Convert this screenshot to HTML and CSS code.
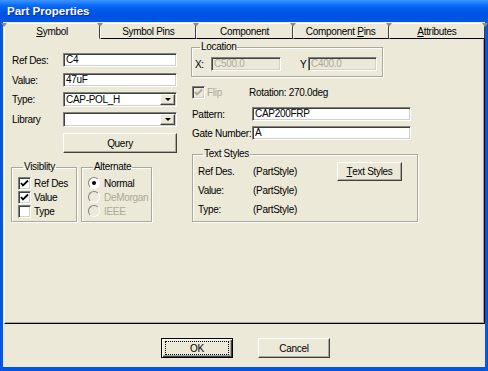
FILE: index.html
```html
<!DOCTYPE html>
<html lang="en">
<head>
    <meta charset="UTF-8">
    <title>Part Properties</title>
    <link rel="stylesheet" href="styles.css">
</head>
<body>
    <div class="window">
        <div class="titlebar"><span class="title">Part Properties</span></div>
        <div class="client">
            <div class="tabs">
                <div class="tab active"><u>S</u>ymbol</div>
                <div class="tab">Symbol Pins</div>
                <div class="tab">Component</div>
                <div class="tab">Component <u>P</u>ins</div>
                <div class="tab last"><u>A</u>ttributes</div>
            </div>
            <div class="panel">
                <div class="col-left">
                    <div class="field f1"><span class="lbl">Ref Des:</span><div class="edit">C4</div></div>
                    <div class="field f2"><span class="lbl">Value:</span><div class="edit">47uF</div></div>
                    <div class="field f3"><span class="lbl">Type:</span>
                        <div class="combo"><span class="combo-text">CAP-POL_H</span><span class="drop"><i></i></span></div>
                    </div>
                    <div class="field f4"><span class="lbl">Library</span>
                        <div class="combo"><span class="combo-text"></span><span class="drop"><i></i></span></div>
                    </div>
                    <div class="btn query">Query</div>

                    <div class="groups">
                        <fieldset class="group vis">
                            <legend>Visiblity</legend>
                            <div class="opt"><span class="check"><svg width="9" height="9" viewBox="0 0 9 9"><path d="M1 4 L3 6.5 L8 1.5" fill="none" stroke="#000" stroke-width="1.8"/></svg></span>Ref Des</div>
                            <div class="opt"><span class="check"><svg width="9" height="9" viewBox="0 0 9 9"><path d="M1 4 L3 6.5 L8 1.5" fill="none" stroke="#000" stroke-width="1.8"/></svg></span>Value</div>
                            <div class="opt"><span class="check"></span>Type</div>
                        </fieldset>
                        <fieldset class="group alt">
                            <legend>Alternate</legend>
                            <div class="opt"><span class="radio on"></span>Normal</div>
                            <div class="opt off"><span class="radio"></span>DeMorgan</div>
                            <div class="opt off"><span class="radio"></span>IEEE</div>
                        </fieldset>
                    </div>
                </div>

                <div class="col-right">
                    <fieldset class="group loc">
                        <legend>Location</legend>
                        <div class="loc-row">
                            <span class="lbl-x">X:</span><div class="edit disabled w-x">C500.0</div>
                            <span class="lbl-y">Y</span><div class="edit disabled w-y">C400.0</div>
                        </div>
                    </fieldset>

                    <div class="flip-row">
                        <span class="check disabled"><svg width="9" height="9" viewBox="0 0 9 9"><path d="M1 4 L3 6.5 L8 1.5" fill="none" stroke="#aca899" stroke-width="1.8"/></svg></span>
                        <span class="flip-lbl">Flip</span>
                        <span>Rotation: 270.0deg</span>
                    </div>

                    <div class="field r1"><span class="lbl wide">Pattern:</span><div class="edit long">CAP200FRP</div></div>
                    <div class="field r2"><span class="lbl wide">Gate Number:</span><div class="edit long">A</div></div>

                    <fieldset class="group styles">
                        <legend>Text Styles</legend>
                        <div class="style-grid">
                            <span>Ref Des.</span><span>(PartStyle)</span><div class="btn txt-btn"><u>T</u>ext Styles</div>
                            <span>Value:</span><span>(PartStyle)</span><span></span>
                            <span>Type:</span><span>(PartStyle)</span><span></span>
                        </div>
                    </fieldset>
                </div>
            </div>

            <div class="actions">
                <div class="btn default"><span class="focus">OK</span></div>
                <div class="btn">Cancel</div>
            </div>
        </div>
    </div>
</body>
</html>
```

FILE: styles.css
```css
*
{
  margin: 0;
  padding: 0;
  box-sizing: border-box;
}
body{
  width: 488px;
  height: 371px;
  overflow: hidden;
  font-family: "Liberation Sans", Arial, sans-serif;
  font-size: 10px;
  letter-spacing: -0.3px;
  color: #000;
  white-space: nowrap;
}
.window{
  width: 488px;
  height: 371px;
  display: flex;
  flex-direction: column;
  background: linear-gradient(90deg, #0042c8 0, #0a5cf2 1px, #0055e5 3px, #0055e5 485px, #0a5cf2 487px, #0042c8 488px);
}
.titlebar{
  height: 22px;
  padding-left: 7px;
  display: flex;
  align-items: center;
  background: linear-gradient(#3d95ff 0, #2a87ff 2px, #0d6dfb 5px, #025ded 9px, #0054e3 13px, #0053e0 18px, #0059ea 22px);
}
.title{
  color: #fff;
  font-weight: bold;
  font-size: 11.5px;
  letter-spacing: 0;
  text-shadow: 1px 1px #0b2e9a;
}
.client{
  flex: 1;
  margin: 0 3px 4px 3px;
  padding: 1px 0 0 1px;
  background: #ece9d8;
  display: flex;
  flex-direction: column;
}

/* tabs */
.tabs{
  display: flex;
  height: 16px;
}
.tab{
  position: relative;
  flex: 1;
  text-align: center;
  line-height: 16px;
  border: 1px solid;
  border-color: #fff #404040 #000 #fff;
}
.tab.active{
  border-bottom-color: #ece9d8;
}
.tab::before{
  content: '';
  position: absolute;
  top: -1px;
  left: -4px;
  border-left: 3px solid transparent;
  border-right: 3px solid transparent;
  border-top: 4px solid #8d8a7e;
}
.tab.last::after{
  content: '';
  position: absolute;
  top: -1px;
  right: -4px;
  border-left: 3px solid transparent;
  border-right: 3px solid transparent;
  border-top: 4px solid #8d8a7e;
}

.panel{
  height: 285px;
  display: flex;
  border-left: 1px solid #fff;
  border-right: 1px solid #000;
  border-bottom: 1px solid #000;
  box-shadow: inset -1px -1px #aca899;
}

/* controls */
.field{
  display: flex;
  align-items: center;
}
.lbl{
  width: 52px;
  padding-left: 1px;
}
.edit{
  width: 114px;
  height: 14px;
  padding-left: 2px;
  line-height: 12px;
  background: #fff;
  border: 1px solid;
  border-color: #808080 #fff #fff #808080;
  box-shadow: inset 1px 1px #404040, inset -1px -1px #d4d0c8;
  overflow: hidden;
}
.edit.disabled{
  background: #ece9d8;
  color: #aca899;
}
.combo{
  width: 114px;
  height: 15px;
  display: flex;
  background: #fff;
  border: 1px solid;
  border-color: #808080 #fff #fff #808080;
  box-shadow: inset 1px 1px #404040, inset -1px -1px #d4d0c8;
  padding: 1px 1px 1px 2px;
}
.combo-text{
  flex: 1;
  line-height: 11px;
}
.drop{
  width: 15px;
  height: 11px;
  display: flex;
  align-items: center;
  justify-content: center;
  background: #ece9d8;
  border: 1px solid;
  border-color: #fff #404040 #404040 #fff;
  box-shadow: inset -1px -1px #aca899;
}
.drop i{
  border-left: 3px solid transparent;
  border-right: 3px solid transparent;
  border-top: 3px solid #000;
}
.btn{
  display: flex;
  align-items: center;
  justify-content: center;
  background: #ece9d8;
  border: 1px solid;
  border-color: #fff #404040 #404040 #fff;
  box-shadow: inset -1px -1px #aca899;
}
.check{
  width: 13px;
  height: 13px;
  display: inline-flex;
  align-items: center;
  justify-content: center;
  background: #fff;
  border: 1px solid;
  border-color: #808080 #fff #fff #808080;
  box-shadow: inset 1px 1px #404040, inset -1px -1px #d4d0c8;
}
.check.disabled{
  background: #ece9d8;
}
.radio{
  width: 12px;
  height: 12px;
  display: inline-flex;
  align-items: center;
  justify-content: center;
  border-radius: 50%;
  background: #fff;
  border: 1px solid;
  border-color: #808080 #fff #fff #808080;
}
.radio.on::after{
  content: '';
  width: 4px;
  height: 4px;
  border-radius: 50%;
  background: #000;
}
.opt.off{
  color: #aca899;
}
.opt.off .radio{
  background: #ece9d8;
}

/* group boxes */
.group{
  border: 1px solid #aca899;
  box-shadow: 1px 1px #fff, inset 1px 1px #fff;
}
.group legend{
  margin-left: 5px;
  padding: 0 1px;
  line-height: 12px;
}

/* left column */
.col-left{
  width: 166px;
  margin: 14px 0 0 6px;
}
.f1{ margin-bottom: 6px; }
.f2{ margin-bottom: 5px; }
.f3{ margin-bottom: 5px; }
.f4{ margin-bottom: 6px; }
.query{
  width: 114px;
  height: 20px;
  margin-left: 52px;
}
.groups{
  display: flex;
  gap: 4px;
  margin-top: 8px;
}
.vis{
  width: 66px;
  height: 61px;
  padding: 3px 0 0 6px;
}
.alt{
  width: 71px;
  height: 61px;
  padding: 3px 0 0 6px;
}
.opt{
  height: 14px;
  display: flex;
  align-items: center;
  gap: 3px;
}
.alt .opt{
  gap: 0;
}
.alt .radio{
  margin-right: 4px;
}

/* right column */
.col-right{
  width: 227px;
  margin: 2px 0 0 14px;
}
.loc{
  width: 192px;
  padding: 4px 0 5px 3px;
}
.loc-row{
  display: flex;
  align-items: center;
}
.lbl-x{ width: 16px; }
.lbl-y{ width: 27px; padding-left: 19px; }
.w-x{ width: 70px; }
.w-y{ width: 69px; }
.flip-row{
  display: flex;
  align-items: center;
  height: 13px;
  margin: 9px 0 0 1px;
}
.flip-lbl{
  width: 44px;
  padding-left: 2px;
  color: #aca899;
}
.lbl.wide{ width: 61px; }
.edit.long{ width: 159px; }
.r1{ margin-top: 8px; }
.r2{ margin-top: 5px; }
.styles{
  width: 226px;
  height: 74px;
  margin: 8px 0 0 1px;
  padding: 2px 0 0 5px;
}
.style-grid{
  display: grid;
  grid-template-columns: 55px 84px 65px;
  grid-auto-rows: 19px;
  align-items: center;
}
.txt-btn{
  height: 19px;
}

/* bottom buttons */
.actions{
  display: flex;
  justify-content: center;
  gap: 25px;
  padding: 14px 0 0 2px;
}
.actions .btn{
  width: 72px;
  height: 20px;
}
.actions .btn.default{
  border: 1px solid #000;
  box-shadow: inset 1px 1px #fff, inset -1px -1px #404040, inset -2px -2px #aca899;
}
.focus{
  width: 64px;
  height: 14px;
  border: 1px dotted #000;
  display: flex;
  align-items: center;
  justify-content: center;
}
```
